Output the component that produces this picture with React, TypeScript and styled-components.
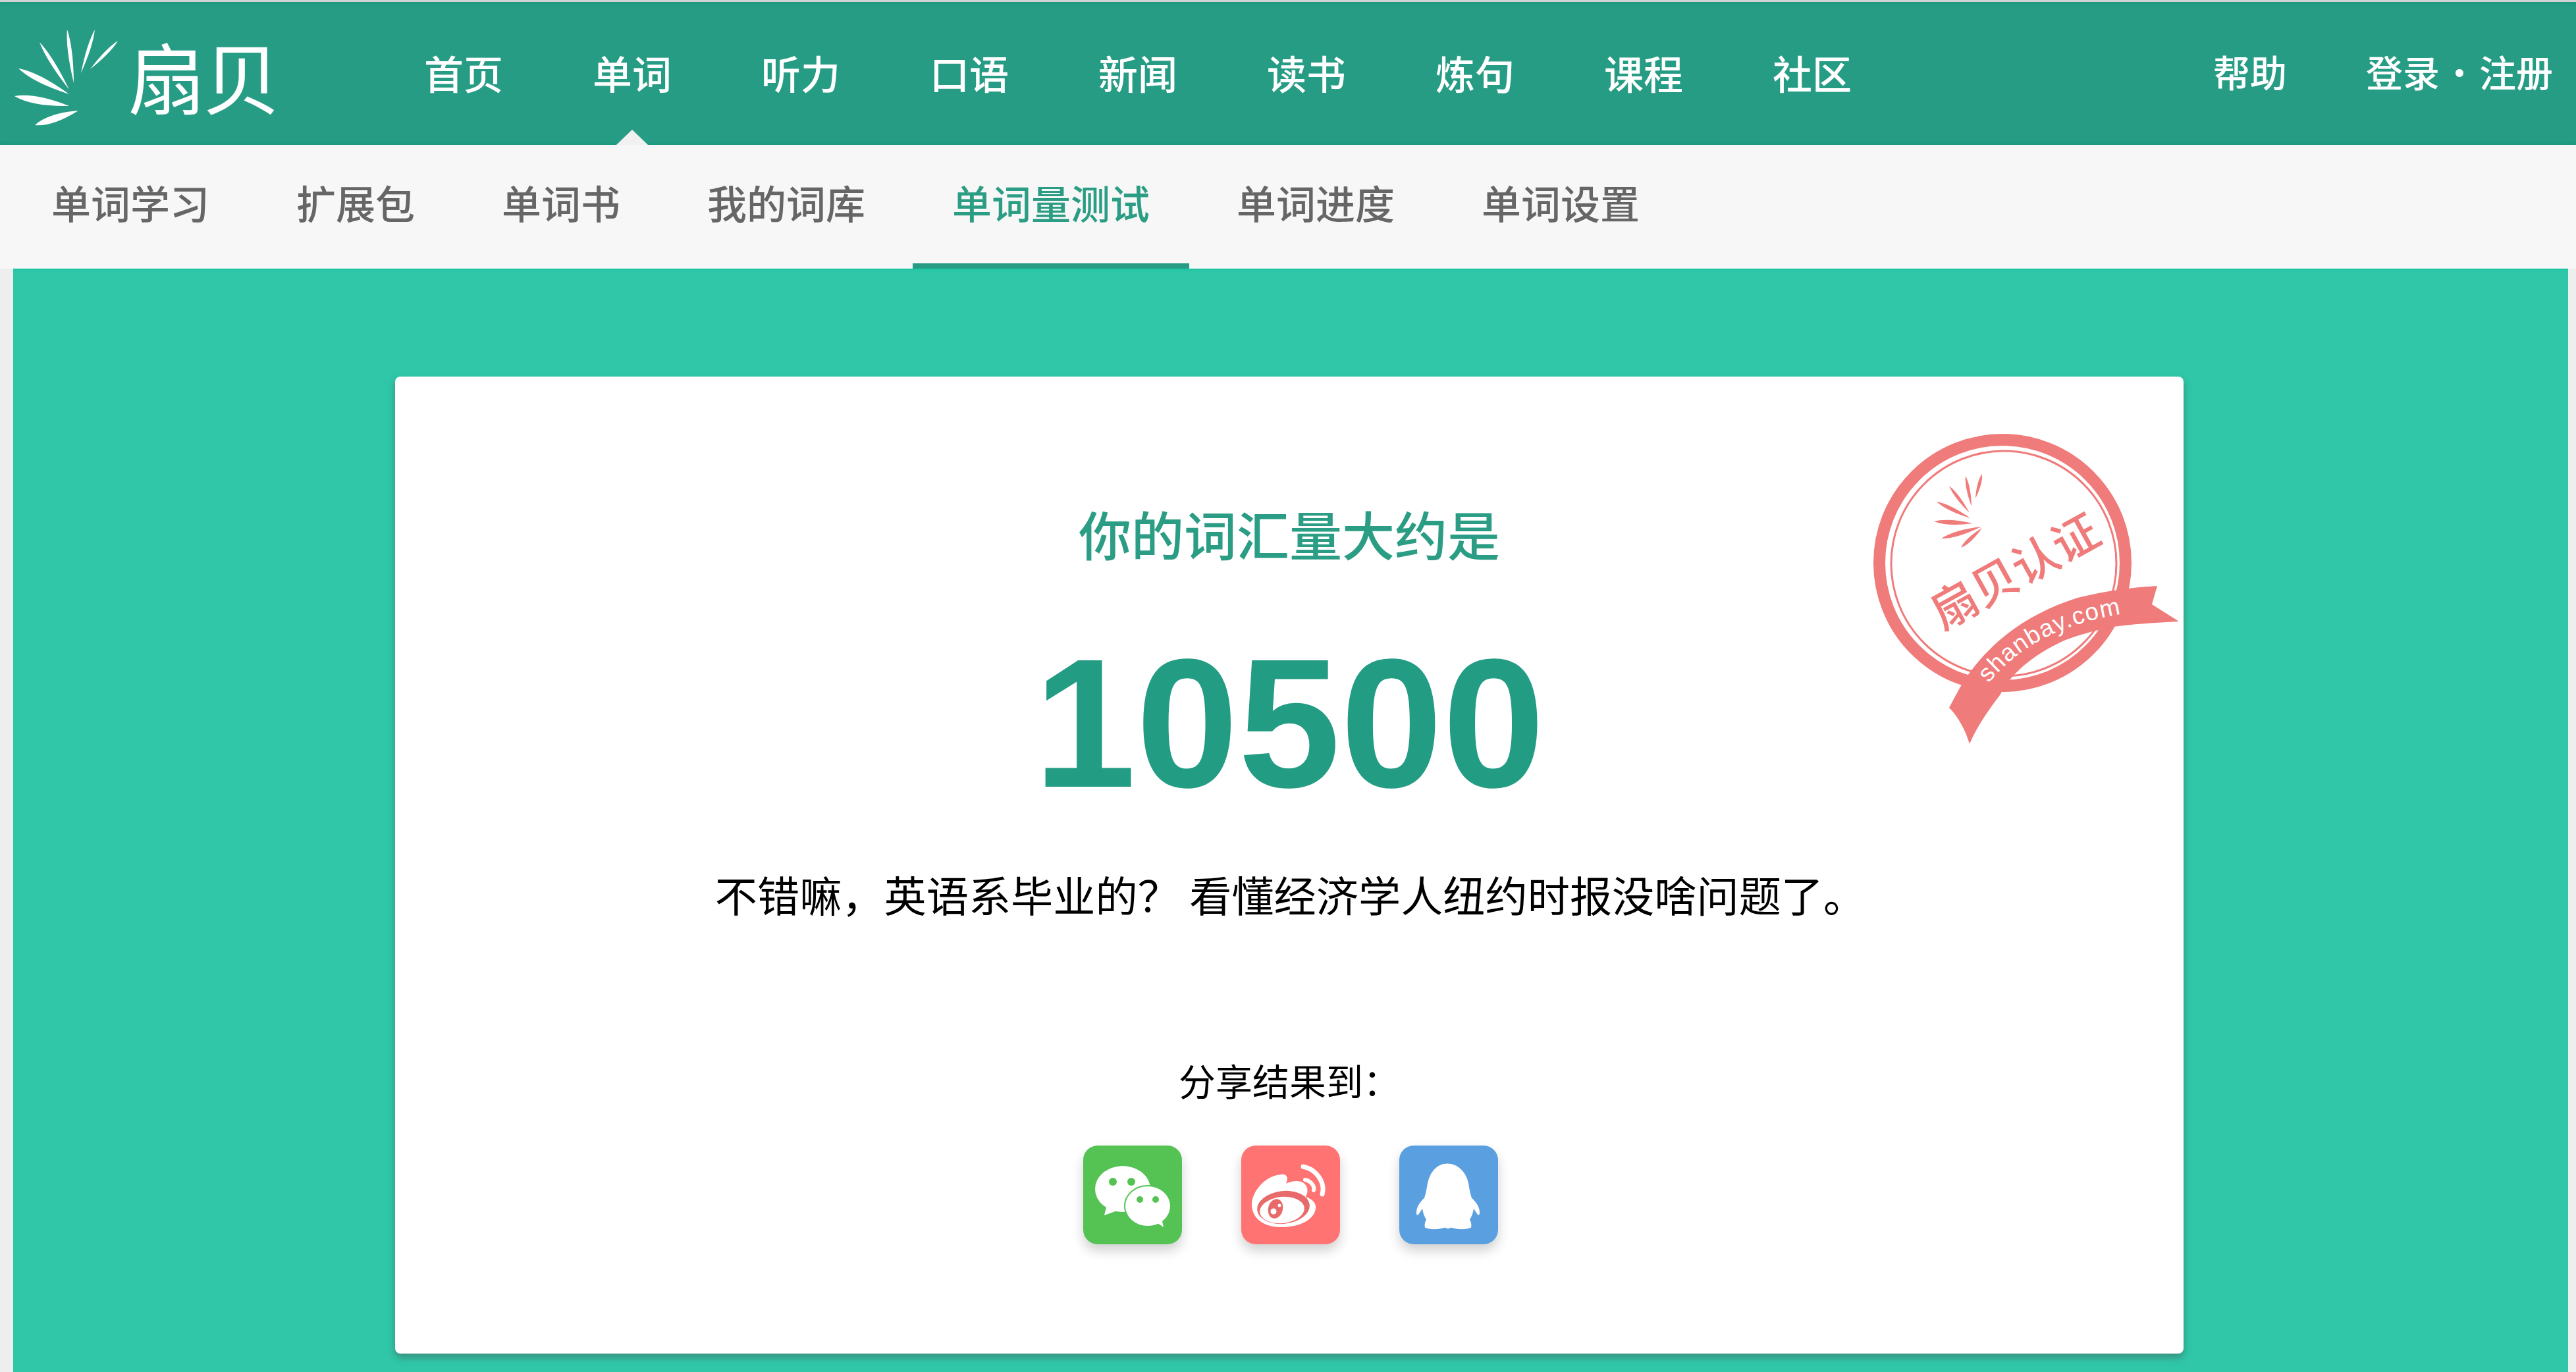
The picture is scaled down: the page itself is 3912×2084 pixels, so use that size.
import React from 'react';
import styled, { createGlobalStyle } from 'styled-components';

const GlobalStyle = createGlobalStyle`
  html, body {
    margin: 0;
    padding: 0;
    background: #eeeeee;
  }
  body {
    font-family: "Noto Sans CJK SC", "Liberation Sans", sans-serif;
  }
`;

const Page = styled.div`
  width: 3912px;
  height: 2084px;
  overflow: hidden;
  background: #eeeeee;
`;

const Header = styled.header`
  display: flex;
  align-items: flex-start;
  height: 217px;
  border-top: 3px solid #cfd4d2;
  background: #279c85;
  box-shadow: inset 0 8px 6px -4px #1f9a80, inset 0 -12px 4px -8px #1f9a80;
`;

const LogoLink = styled.a`
  display: flex;
  flex: none;
  width: 644px;
  height: 180px;
`;

const LogoMark = styled.svg`
  flex: none;
  width: 190px;
  height: 190px;
`;

const LogoText = styled.span`
  margin: 36px 0 0 4px;
  color: #ffffff;
  font-size: 118px;
  font-weight: 400;
  line-height: 150px;
  letter-spacing: -4px;
  white-space: nowrap;
`;

const MainNav = styled.nav`
  display: flex;
  gap: 136px;
  padding-top: 74px;
`;

const MainNavItem = styled.a<{ $active?: boolean }>`
  position: relative;
  display: block;
  height: 143px;
  color: #ffffff;
  font-size: 60px;
  font-weight: 500;
  line-height: 66px;
  white-space: nowrap;

  ${(p) =>
    p.$active &&
    `
    &::after {
      content: '';
      position: absolute;
      left: 50%;
      bottom: 0;
      margin-left: -24px;
      border-left: 24px solid transparent;
      border-right: 24px solid transparent;
      border-bottom: 23px solid #f1f1f1;
    }
  `}
`;

const UserNav = styled.div`
  display: flex;
  gap: 120px;
  margin-left: auto;
  padding: 72px 35px 0 0;
  color: #ffffff;
  font-size: 56px;
  font-weight: 500;
  line-height: 66px;
  white-space: nowrap;
`;

const AuthLinks = styled.div`
  display: flex;
`;

const AuthDot = styled.span`
  width: 60px;
  font-weight: 400;
  text-align: center;
`;

const SubNav = styled.nav`
  display: flex;
  gap: 12px;
  height: 188px;
  padding-left: 18px;
  box-sizing: border-box;
  background: #f7f7f7;
`;

const SubNavItem = styled.a<{ $active?: boolean }>`
  display: block;
  padding: 52px 60px 0;
  box-sizing: border-box;
  height: 188px;
  border-bottom: 8px solid ${(p) => (p.$active ? '#269c84' : 'transparent')};
  color: ${(p) => (p.$active ? '#2b9d84' : '#666666')};
  font-size: 60px;
  font-weight: 500;
  line-height: 70px;
  white-space: nowrap;
`;

const Main = styled.main`
  height: 1676px;
  margin: 0 12px 0 20px;
  padding-top: 164px;
  box-sizing: border-box;
  background: #2fc7a8;
  box-shadow: inset 0 5px 4px -3px #1bc5a2;
`;

const Card = styled.section`
  position: relative;
  display: flex;
  flex-direction: column;
  align-items: center;
  width: 2716px;
  height: 1484px;
  margin-left: 580px;
  border-radius: 8px;
  background: #ffffff;
  box-shadow: 0 6px 12px rgba(70, 70, 70, 0.45);
`;

const Title = styled.h2`
  margin: 179px 0 0;
  color: #2b9d84;
  font-size: 80px;
  font-weight: 500;
  line-height: 116px;
`;

const Score = styled.div`
  margin-top: 71px;
  color: #239c84;
  font-family: "Liberation Sans", Arial, sans-serif;
  font-size: 279px;
  font-weight: 700;
  line-height: 320px;
`;

const Verdict = styled.p`
  margin: 54px 0 0 3px;
  color: #000000;
  font-size: 64.2px;
  line-height: 90px;
  white-space: pre;
`;

const ShareLabel = styled.div`
  margin-top: 198px;
  color: #000000;
  font-size: 56px;
  line-height: 80px;
`;

const ShareRow = styled.div`
  display: flex;
  gap: 90px;
  margin: 60px 0 0 4px;
`;

const ShareIcon = styled.a<{ $color: string }>`
  display: block;
  width: 150px;
  height: 150px;
  border-radius: 22px;
  background: ${(p) => p.$color};
  box-shadow: 0 10px 18px rgba(0, 0, 0, 0.18);

  svg {
    display: block;
  }
`;

const Stamp = styled.svg`
  position: absolute;
  left: 2180px;
  top: 48px;
  width: 560px;
  height: 520px;
  overflow: visible;
`;

const topNav = ['首页', '单词', '听力', '口语', '新闻', '读书', '炼句', '课程', '社区'];
const subNav = ['单词学习', '扩展包', '单词书', '我的词库', '单词量测试', '单词进度', '单词设置'];

// tapered ray between two points, used by both sunbursts
const Ray: React.FC<{ x1: number; y1: number; x2: number; y2: number; w: number; fill: string }> = ({
  x1,
  y1,
  x2,
  y2,
  w,
  fill,
}) => {
  const len = Math.hypot(x2 - x1, y2 - y1);
  const nx = (-(y2 - y1) / len) * w;
  const ny = ((x2 - x1) / len) * w;
  const mx = x1 + (x2 - x1) * 0.35;
  const my = y1 + (y2 - y1) * 0.35;
  return (
    <path
      d={`M${x1} ${y1}Q${mx + nx} ${my + ny} ${x2} ${y2}Q${mx - nx} ${my - ny} ${x1} ${y1}Z`}
      fill={fill}
    />
  );
};

const logoRays = [
  [102, 42, 112, 123, 6],
  [144, 42, 123, 108, 5],
  [179, 59, 137, 102, 5],
  [60, 61, 105, 133, 6],
  [28, 101, 105, 140, 9],
  [22, 143, 105, 158, 11],
  [53, 187, 119, 165, 11],
];

const stampRays = [
  [230, 100, 220, 135, 5],
  [205, 103, 214, 147, 5],
  [180, 118, 211, 157, 5],
  [161, 142, 212, 165, 6],
  [157, 172, 216, 173, 7],
  [168, 198, 229, 178, 7],
  [198, 212, 230, 180, 6],
];

const WechatGlyph = () => (
  <svg width="150" height="150" viewBox="0 0 150 150">
    <ellipse cx="60" cy="66" rx="42" ry="35" fill="#fff" />
    <path d="M36 90L32 106L54 98Z" fill="#fff" />
    <circle cx="45" cy="55" r="6" fill="#54c353" />
    <circle cx="73" cy="55" r="6" fill="#54c353" />
    <ellipse cx="98" cy="92" rx="35" ry="31" fill="#fff" stroke="#54c353" strokeWidth="2" />
    <path d="M110 116L122 124L118 106Z" fill="#fff" />
    <circle cx="86" cy="82" r="5" fill="#54c353" />
    <circle cx="110" cy="82" r="5" fill="#54c353" />
  </svg>
);

const WeiboGlyph = () => (
  <svg width="150" height="150" viewBox="0 0 150 150">
    <path
      d="M16 90C16 70 36 46 60 44C70 42 72 50 68 58C80 52 96 52 100 64C102 72 98 76 98 78C110 82 116 90 112 100C106 116 84 124 60 124C34 124 16 110 16 90Z"
      fill="#fff"
    />
    <ellipse cx="64" cy="94" rx="40" ry="25" fill="#e86a6a" transform="rotate(-6 64 94)" />
    <ellipse cx="62" cy="98" rx="34" ry="20" fill="#fff" transform="rotate(-6 62 98)" />
    <ellipse cx="52" cy="96" rx="11" ry="15" fill="#e86a6a" transform="rotate(14 52 96)" />
    <circle cx="49" cy="100" r="4.5" fill="#fff" />
    <circle cx="58" cy="91" r="2.5" fill="#fff" />
    <path d="M94 32C114 36 128 56 123 74" fill="none" stroke="#fff" strokeWidth="7" strokeLinecap="round" />
    <path d="M97 52C106 54 112 62 110 68" fill="none" stroke="#fff" strokeWidth="6" strokeLinecap="round" />
  </svg>
);

const QQGlyph = () => (
  <svg width="150" height="150" viewBox="0 0 150 147" preserveAspectRatio="none">
    <path
      d="M73 27C88 27 101 38 105 56C107 68 108 72 110 78C118 86 122 92 122 100C122 104 120 105 117 100L113 94C112 100 110 106 107 110C109 114 110 118 109 122C100 126 88 125 78 122C76 124 72 124 70 122C60 125 48 126 39 122C38 118 39 114 41 110C38 106 36 100 35 94L31 100C28 105 26 104 26 100C26 92 30 86 38 78C40 72 41 68 43 56C47 38 58 27 73 27Z"
      fill="#fff"
    />
  </svg>
);

const App: React.FC = () => {
  return (
    <Page>
      <GlobalStyle />
      <Header>
        <LogoLink>
          <LogoMark viewBox="0 0 190 190">
            {logoRays.map(([x1, y1, x2, y2, w]) => (
              <Ray key={`${x1}-${y1}`} x1={x1} y1={y1} x2={x2} y2={y2} w={w} fill="#ffffff" />
            ))}
          </LogoMark>
          <LogoText>扇贝</LogoText>
        </LogoLink>
        <MainNav>
          {topNav.map((item) => (
            <MainNavItem key={item} $active={item === '单词'}>
              {item}
            </MainNavItem>
          ))}
        </MainNav>
        <UserNav>
          <span>帮助</span>
          <AuthLinks>
            <span>登录</span>
            <AuthDot>·</AuthDot>
            <span>注册</span>
          </AuthLinks>
        </UserNav>
      </Header>
      <SubNav>
        {subNav.map((item) => (
          <SubNavItem key={item} $active={item === '单词量测试'}>
            {item}
          </SubNavItem>
        ))}
      </SubNav>
      <Main>
        <Card>
          <Stamp viewBox="0 0 560 520">
            <circle cx="261" cy="235" r="187" fill="none" stroke="#f07b7b" strokeWidth="18" />
            <circle cx="263" cy="236" r="171" fill="none" stroke="#f07b7b" strokeWidth="3" />
            {stampRays.map(([x1, y1, x2, y2, w]) => (
              <Ray key={`${x1}-${y1}`} x1={x1} y1={y1} x2={x2} y2={y2 + 2} w={w} fill="#f07b7b" />
            ))}
            <text
              x="0"
              y="0"
              transform="translate(170 338) rotate(-29)"
              fill="#f07b7b"
              fontFamily='"Noto Sans CJK SC", sans-serif'
              fontSize="70"
              fontWeight="500"
            >
              扇贝认证
            </text>
            <path
              d="M204 412C245 352 300 312 375 288C420 277 460 272 496 270L488 298L529 324C490 326 460 328 429 332C400 338 375 345 357 352C325 366 300 384 286 398C272 410 264 424 257 436C240 458 222 484 211 510C205 490 195 470 180 455C188 440 195 426 204 412Z"
              fill="#f07b7b"
            />
            <path id="stamp-ribbon-line" d="M240 418C285 362 350 328 440 313" fill="none" />
            <text fill="#ffffff" fontFamily='"Liberation Sans", sans-serif' fontSize="37" letterSpacing="1.5">
              <textPath href="#stamp-ribbon-line">shanbay.com</textPath>
            </text>
          </Stamp>
          <Title>你的词汇量大约是</Title>
          <Score>10500</Score>
          <Verdict>不错嘛，英语系毕业的？ 看懂经济学人纽约时报没啥问题了。</Verdict>
          <ShareLabel>分享结果到：</ShareLabel>
          <ShareRow>
            <ShareIcon $color="#54c353">
              <WechatGlyph />
            </ShareIcon>
            <ShareIcon $color="#ff7373">
              <WeiboGlyph />
            </ShareIcon>
            <ShareIcon $color="#5a9fe0">
              <QQGlyph />
            </ShareIcon>
          </ShareRow>
        </Card>
      </Main>
    </Page>
  );
};

export default App;
